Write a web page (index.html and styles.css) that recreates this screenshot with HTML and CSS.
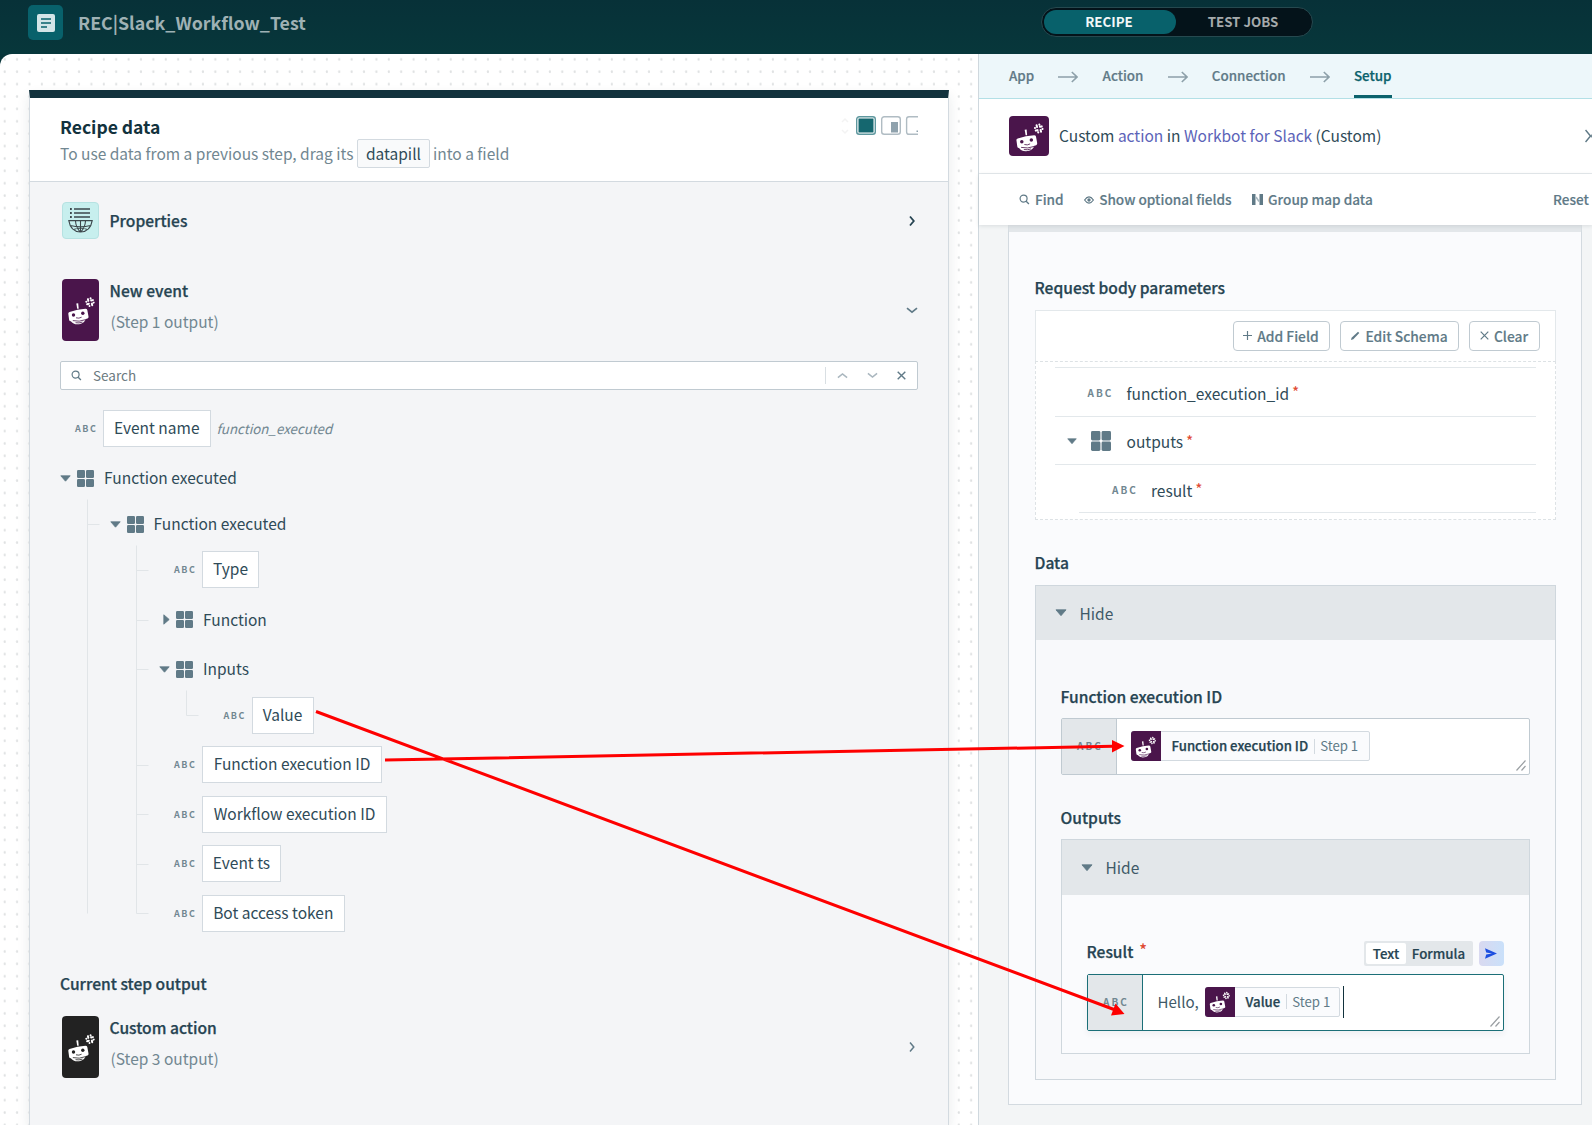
FILE: index.html
```html
<!DOCTYPE html>
<html lang="en">
<head>
<meta charset="utf-8">
<title>REC|Slack_Workflow_Test</title>
<link rel="stylesheet" href="styles.css">
</head>
<body>
<svg class="defs" width="0" height="0">
  <symbol id="bot" viewBox="0 0 38 38">
    <path d="M14.300 12.400l1.900-.2.500 5.600h-1.500z" fill="#fff"/>
    <path d="M6.300 22.800q-.2-1.400 1.200-1.800 8-2.800 16-3.200 1.500 0 1.800 1.300l1.200 6.300q.3 1.600-1 2.100l-1.700.6q-1.600 4.400-6.600 5.100-5.600.7-8.400-3-1.500 0-1.700-1.500z" fill="#fff"/>
    <circle class="cut" cx="11.500" cy="24" r="1.700"/><circle class="cut" cx="20.800" cy="22.300" r="1.700"/>
    <path class="cutline" d="M14 26.800q3 1 5.600-.6M10.800 29.600q6.400 1.600 13-1M13.500 31.700q3.500.7 7-.6"/>
    <g transform="rotate(-14 28 11.200)" stroke="#fff" stroke-width="2" stroke-linecap="round"><path d="M26.700 7.700v1.800M29.500 9.900h1.800M29.400 14.800v-1.800M26.500 12.500h-1.800M29.500 7.600v.1M31.500 12.500h-.1M26.600 14.800v-.1M24.500 9.900h.1"/></g>
  </symbol>
  <symbol id="grid" viewBox="0 0 17 17"><g fill="#607a87"><rect width="8" height="8" rx="1.2"/><rect x="9" width="8" height="8" rx="1.2"/><rect y="9" width="8" height="8" rx="1.2"/><rect x="9" y="9" width="8" height="8" rx="1.2"/></g></symbol>
  <symbol id="down" viewBox="0 0 11 7"><path d="M.8.8h9.4L5.5 6.2z" fill="#607a87" stroke="#607a87" stroke-width=".8" stroke-linejoin="round"/></symbol>
  <symbol id="right" viewBox="0 0 7 11"><path d="M.8.8v9.4L6.2 5.5z" fill="#607a87" stroke="#607a87" stroke-width=".8" stroke-linejoin="round"/></symbol>
  <symbol id="arrow" viewBox="0 0 20 12"><path d="M0 6h19M13.8 1l5.2 5-5.2 5" fill="none" stroke="#8da0a9" stroke-width="1.6"/></symbol>
  <symbol id="lens" viewBox="0 0 12 12"><circle cx="5" cy="5" r="3.8" fill="none" stroke="#607a87" stroke-width="1.3"/><path d="M7.8 7.8l3 3" stroke="#607a87" stroke-width="1.5"/></symbol>
  <symbol id="grip" viewBox="0 0 10 11"><path d="M.5 10.5l9-10M5.5 10.5l4-4.5" stroke="#9a9fa3" stroke-width="1.2"/></symbol>
  <symbol id="chev" viewBox="0 0 12 7"><path d="M1 1.2l5 4 5-4" fill="none" stroke="currentColor" stroke-width="1.7"/></symbol>
</svg>

<header class="topbar">
  <div class="logo"><svg width="18" height="18" viewBox="0 0 18 18"><rect width="18" height="18" rx="2" fill="#d3e5e8"/><path d="M4 5h10M4 9h10M4 13h6" stroke="#08616b" stroke-width="1.7"/></svg></div>
  <h1>REC|Slack_Workflow_Test</h1>
  <div class="tabs"><span class="on">RECIPE</span><span>TEST JOBS</span></div>
</header>

<main class="canvas">
  <section class="data">
    <div class="data-head">
      <div>
        <h2>Recipe data</h2>
        <p class="hint"><span>To use data from a previous step, drag its</span><b>datapill</b><span>into a field</span></p>
      </div>
      <svg class="views" width="78" height="22" viewBox="0 0 78 22">
        <path d="M1 7l3-3 3 3M1 15l3 3 3-3" fill="none" stroke="#f3f3f3" stroke-width="1.5"/>
        <rect x="15.7" y="1.7" width="18.6" height="17.6" rx="2.5" fill="#fff" stroke="#5e979e" stroke-width="1.4"/><rect x="17.5" y="3.5" width="15" height="14" fill="#15676f"/>
        <rect x="40.7" y="1.7" width="18.6" height="17.6" rx="2.5" fill="#fff" stroke="#b0bcc3" stroke-width="1.4"/><rect x="50" y="7" width="7" height="10.5" fill="#8fa2ad"/>
        <path d="M77 1.7H68q-2.4 0-2.4 2.4v12.8q0 2.4 2.4 2.4h9" fill="none" stroke="#b0bcc3" stroke-width="1.4"/><path d="M75.500 15.500H77V17h-1.500z" fill="#8fa2ad"/>
      </svg>
    </div>
    <div class="data-body">
      <div class="step props">
        <div class="globe"><svg width="25" height="27" viewBox="0 0 25 27"><g fill="none" stroke="#3d474c" stroke-width="1.3"><path d="M6 2h16M6 6h16M6 10h16"/><path stroke-width="2" d="M2 2h1.8M2 6h1.8M2 10h1.8"/><path stroke-width="1.1" d="M.8 13.6h23.4q-1.8 11-11.7 11.4Q2.600 24.600.8 13.600zM2.500 18.500q10 2.500 20 0M5.800 22.500q6.700-3 13.400 0M7.500 14q.4 7 5 11M17.500 14q-.4 7-5 11M12.500 14v11"/></g></svg></div>
        <div class="names"><strong>Properties</strong></div>
        <svg class="go dark" width="7" height="12" viewBox="0 0 7 12"><path d="M1 1.500l3.800 4.500L1 10.500" fill="none" stroke="currentColor" stroke-width="1.800"/></svg>
      </div>
      <div class="step tall">
        <div class="tile"><svg width="38" height="38"><use href="#bot"/></svg></div>
        <div class="names"><strong>New event</strong><span>(Step 1 output)</span></div>
        <svg class="go" width="12" height="7"><use href="#chev"/></svg>
      </div>
      <div class="search">
        <svg width="11" height="11"><use href="#lens"/></svg><span>Search</span>
        <i></i>
        <svg class="pale up" width="11" height="7"><use href="#chev"/></svg>
        <svg class="pale" width="11" height="7"><use href="#chev"/></svg>
        <svg width="9" height="9" viewBox="0 0 9 9"><path d="M.7.7l7.600 7.600M8.300.7L.7 8.300" stroke="#607a87" stroke-width="1.400"/></svg>
      </div>
      <div class="tree">
        <svg class="lines" width="140" height="520" viewBox="0 0 140 520"><path d="M27.500 88.500v414M27.500 113.500h12M76.500 134.500v368M76.500 159.500h12M76.500 209.500h12M76.500 258.500h12M76.500 354.500h12M76.500 403.500h12M76.500 453.500h12M76.500 502.500h12M126.500 279.500v25h12" fill="none" stroke="#e1e5e8"/></svg>
        <div class="row l0"><abbr>ABC</abbr><span class="pill" style="width:107.500px">Event name</span><em>function_executed</em></div>
        <div class="row node n0"><svg width="11" height="7"><use href="#down"/></svg><svg width="17" height="17"><use href="#grid"/></svg>Function executed</div>
        <div class="row node n1"><svg width="11" height="7"><use href="#down"/></svg><svg width="17" height="17"><use href="#grid"/></svg>Function executed</div>
        <div class="row l2 close"><abbr>ABC</abbr><span class="pill" style="width:57px">Type</span></div>
        <div class="row node n2"><svg class="r" width="11" height="11"><use href="#right"/></svg><svg width="17" height="17"><use href="#grid"/></svg>Function</div>
        <div class="row node n2"><svg width="11" height="7"><use href="#down"/></svg><svg width="17" height="17"><use href="#grid"/></svg>Inputs</div>
        <div class="row l3 close"><abbr>ABC</abbr><span class="pill" style="width:62px">Value</span></div>
        <div class="row l2"><abbr>ABC</abbr><span class="pill" style="width:180px">Function execution ID</span></div>
        <div class="row l2"><abbr>ABC</abbr><span class="pill" style="width:185px">Workflow execution ID</span></div>
        <div class="row l2"><abbr>ABC</abbr><span class="pill" style="width:79px">Event ts</span></div>
        <div class="row l2"><abbr>ABC</abbr><span class="pill" style="width:142.500px">Bot access token</span></div>
      </div>
      <h3>Current step output</h3>
      <div class="step tall last">
        <div class="tile black"><svg width="38" height="38"><use href="#bot"/></svg></div>
        <div class="names"><strong>Custom action</strong><span>(Step 3 output)</span></div>
        <svg class="go" width="7" height="12" viewBox="0 0 7 12"><path d="M1 1.500l3.800 4.500L1 10.500" fill="none" stroke="currentColor" stroke-width="1.500"/></svg>
      </div>
    </div>
  </section>

  <aside class="config">
    <nav>
      <span>App</span><svg width="20" height="12"><use href="#arrow"/></svg>
      <span>Action</span><svg width="20" height="12"><use href="#arrow"/></svg>
      <span>Connection</span><svg width="20" height="12"><use href="#arrow"/></svg>
      <span class="on">Setup</span>
    </nav>
    <div class="action">
      <div class="tile sq"><svg width="39" height="39"><use href="#bot"/></svg></div>
      <p>Custom <a>action</a> in <a>Workbot for Slack</a> (Custom)</p>
      <svg width="7" height="14" viewBox="0 0 7 14"><path d="M.5 1l5 6-5 6M7 5.500v3" fill="none" stroke="#607a87" stroke-width="1.500"/></svg>
    </div>
    <div class="tools">
      <span><svg width="11" height="11"><use href="#lens"/></svg>Find</span>
      <span><svg width="10" height="8" viewBox="0 0 10 8"><path d="M.6 4Q5-2.400 9.400 4 5 10.400.6 4z" fill="none" stroke="#607a87" stroke-width="1.200"/><circle cx="5" cy="4" r="1.700" fill="#607a87"/></svg>Show optional fields</span>
      <span><svg width="11" height="11" viewBox="0 0 11 11"><path d="M0 0h3.500v11H0zM7.500 0H11v11H7.500z" fill="#607a87"/><path d="M4 3l3 4.500" stroke="#a5b5bd" stroke-width="1.500"/></svg>Group map data</span>
      <span class="reset">Reset</span>
    </div>
    <div class="scroll">
      <div class="form">
        <h4 class="first">Request body parameters</h4>
        <div class="schema">
          <div class="buttons">
            <button style="width:97px"><svg width="9" height="9" viewBox="0 0 10 10"><path d="M5 0v10M0 5h10" stroke="#607a87" stroke-width="1.300"/></svg>Add Field</button>
            <button style="width:119px"><svg width="10" height="10" viewBox="0 0 10 10"><path d="M1 9l.6-2.300L8 .8l1.300 1.300-6 6.200z" fill="#607a87"/></svg>Edit Schema</button>
            <button style="width:71px"><svg width="9" height="9" viewBox="0 0 9 9"><path d="M.7.7l7.600 7.600M8.300.7L.7 8.300" stroke="#607a87" stroke-width="1.200"/></svg>Clear</button>
          </div>
          <div class="fields">
            <div class="f"><abbr>ABC</abbr><span>function_execution_id</span><sup>*</sup></div>
            <div class="f g"><svg width="10" height="6.500"><use href="#down"/></svg><svg width="20" height="20"><use href="#grid"/></svg><span>outputs</span><sup>*</sup></div>
            <div class="f sub"><abbr>ABC</abbr><span>result</span><sup>*</sup></div>
          </div>
        </div>
        <h4 class="second">Data</h4>
        <div class="group outer">
          <div class="hide"><svg width="12" height="7.500"><use href="#down"/></svg>Hide</div>
          <h4 class="fe">Function execution ID</h4>
          <div class="input">
            <div class="type">ABC</div>
            <div class="value">
              <div class="token" style="width:239px"><i class="tile"><svg width="29" height="29"><use href="#bot"/></svg></i><b>Function execution ID</b><u></u><span>Step 1</span></div>
            </div>
            <svg class="grip" width="10" height="11"><use href="#grip"/></svg>
          </div>
          <h4 class="out">Outputs</h4>
          <div class="group inner">
            <div class="hide"><svg width="12" height="7.500"><use href="#down"/></svg>Hide</div>
            <div class="result">
              <h4>Result <sup>*</sup></h4>
              <div class="mode"><span class="on">Text</span><span>Formula</span></div>
              <div class="send"><svg width="12" height="11" viewBox="0 0 12 11"><path d="M0 .3l12 5.200-12 5.200 1.200-4.200L7 5.500 1.200 4.500z" fill="#1c4fe0"/></svg></div>
            </div>
            <div class="input focus">
              <div class="type">ABC</div>
              <div class="value">
                <span class="txt">Hello,</span>
                <div class="token" style="width:135px"><i class="tile"><svg width="29" height="29"><use href="#bot"/></svg></i><b>Value</b><u></u><span>Step 1</span></div>
                <s></s>
              </div>
              <svg class="grip" width="10" height="11"><use href="#grip"/></svg>
            </div>
          </div>
        </div>
      </div>
    </div>
  </aside>
</main>

<svg class="links" width="1592" height="1125" viewBox="0 0 1592 1125">
  <path d="M385 760L1113 746.300M316 711.500L1114 1009.500" stroke="#fe0000" stroke-width="3"/>
  <path d="M1124.500 746l-12.500-6v12.500zM1124.500 1014l-9-10.500-4.500 12z" fill="#fe0000"/>
</svg>
</body>
</html>
```
FILE: styles.css
```css
* { box-sizing: border-box; }
body {
  margin: 0; width: 1592px; height: 1125px; overflow: hidden; position: relative;
  background: #073439; color: #2f4b58;
  font: 400 15.500px/20px "Noto Sans CJK SC", sans-serif;
}
h1, h2, h3, h4, p { margin: 0; }
svg { display: block; flex: none; }
.defs { position: absolute; }
.cut { fill: var(--tile, #4a154b); }
.cutline { fill: none; stroke: var(--tile, #4a154b); stroke-width: .8; }

.topbar { height: 54px; display: flex; padding: 5px 0 0 28px; background: linear-gradient(#073138, #07373b); }
.logo { width: 35px; height: 35px; border-radius: 5px; background: #08616b; display: grid; place-items: center; }
h1 { width: 963px; margin-left: 15px; font-size: 17.800px; line-height: 35px; color: #9fb1b4; }
.tabs { width: 272px; height: 30px; margin-top: 2px; padding: 2px; border: 1px solid #26494f; border-radius: 15px; background: #04131a; display: flex; font-size: 13.300px; font-weight: 700; line-height: 24px; color: #a5aaac; text-align: center; }
.tabs span { width: 136px; height: 24px; border-radius: 12px; }
.tabs .on { width: 132px; padding-right: 2px; background: #08616b; color: #f2f8f8; flex: none; }

.canvas { height: 1071px; display: flex; border-top-left-radius: 12px; overflow: hidden; background: radial-gradient(circle at 4.700px 5.300px, #dfe1e2 0 .9px, transparent 1.500px) 0 0 / 12.400px 12.400px #fff; }

.data { width: 920px; margin: 36px 29px 0 29px; border: 1px solid #d3dae0; border-top: 8px solid #12323d; border-bottom: 0; background: #f4f5f7; box-shadow: 0 6px 12px rgba(30, 50, 60, .1); }
.data-head { height: 84px; padding: 17px 29px 0 30px; display: flex; justify-content: space-between; background: #fff; border-bottom: 1px solid #d3dae0; }
h2 { font-size: 17.500px; line-height: 24px; color: #12323d; }
.hint { display: flex; align-items: center; line-height: 29px; color: #718791; }
.hint b { width: 73px; height: 29px; margin: 0 3px 0 3.500px; line-height: 27px; border: 1px solid #d3dae0; border-radius: 2px; background: #f9fafb; font-weight: 400; color: #2f4b58; text-align: center; }
.data-body { padding: 20px 30px 0; }
.step { display: flex; align-items: center; padding-left: 2px; height: 37px; }
.tall { height: 62px; margin-top: 40px; }
.last { margin-top: 21px; }
.globe { width: 37px; height: 37px; border: 1px solid #b6e2e2; border-radius: 4px; background: #c7efee; display: grid; place-items: center; }
.tile { width: 37px; height: 62px; border-radius: 4px; background: #4a154b; display: grid; place-items: center; flex: none; }
.black { --tile: #222; background: #222; }
.names { flex: 1; padding-left: 10.500px; display: flex; flex-direction: column; }
.tall .names { margin-top: -8px; }
.names span { line-height: 31px; padding-left: 1px; color: #718791; }
.names strong { line-height: 31px; }
strong, h3, h4 { font-size: 15.600px; font-weight: 500; color: #264452; -webkit-text-stroke: .25px #264452; }
.go { color: #607a87; }
.go[width="7"] { margin-right: 2px; }
.dark { color: #264452; }
.search { height: 29px; margin-top: 20px; padding: 0 11px 0 10px; display: flex; align-items: center; background: #fff; border: 1px solid #c0cad1; border-radius: 2px; font-size: 13.500px; color: #6b7a80; }
.search span { margin: -1px 0 0 11px; flex: 1; }
.search i { width: 1px; height: 17px; background: #d9dfe3; margin-right: 11px; }
.pale { color: #aab7bf; margin-right: 19px; }
.up { transform: scaleY(-1); }
.tree { position: relative; padding-top: 20px; }
.lines { position: absolute; left: 0; top: 20.500px; }
.row { position: relative; height: 37px; margin-top: 12.650px; display: flex; align-items: center; }
.row.l0 { margin-top: 0; padding-left: 15px; }
.row.n1 { margin-top: 9px; padding-left: 49.500px; }
.row.close { margin-top: 8.800px; }
.l2 { padding-left: 114px; }
.n2 { padding-left: 99px; }
.l3 { padding-left: 163.500px; }
abbr, .type { font-size: 9px; font-weight: 700; letter-spacing: 1.500px; color: #718791; }
.row abbr { width: 28px; padding-top: 1px; }
.pill { height: 37px; line-height: 33px; border: 1px solid #d3dae0; background: #fff; text-align: center; }
.row em { margin-left: 6px; font-size: 13.300px; color: #718791; }
.node { padding-bottom: 2px; }
.node svg { margin-top: 2px; }
.node svg.r { margin: 2px -2px 0 2px; }
.node svg + svg { margin: 2px 10px 0 6px; }
h3 { margin-top: 39px; line-height: 24px; }

.config { width: 614px; border-left: 1px solid #cfd8de; background: #f3f5f6; display: flex; flex-direction: column; }
nav { height: 45px; padding-left: 30px; display: flex; background: #edf7fa; border-bottom: 1px solid #b3e0e6; font-size: 13.400px; font-weight: 500; line-height: 42px; color: #607a87; -webkit-text-stroke: .2px #607a87; }
nav svg { margin: 16.500px 24.200px 0; }
nav .on { color: #0b626c; border-bottom: 3px solid #0b626c; height: 44px; -webkit-text-stroke: .25px #0b626c; }
.action { height: 75px; padding-left: 30px; display: flex; align-items: center; background: #fff; border-bottom: 1px solid #e6eaed; }
.tile.sq { width: 40px; height: 40px; }
.action p { flex: 1; padding-left: 10px; margin-top: -3px; }
.action a { color: #5c63b8; }
.tools { height: 51px; padding: 0 3px 0 40px; display: flex; align-items: center; gap: 20.500px; background: #fff; font-size: 13.600px; font-weight: 500; color: #607a87; -webkit-text-stroke: .15px #607a87; box-shadow: 0 1px 4px rgba(30, 50, 60, .12); position: relative; }
.tools span { display: flex; align-items: center; gap: 5px; margin-top: -2px; }
.tools svg { margin-top: 2px; }
.tools .reset { margin-left: auto; }
.scroll { padding-left: 29px; }
.form { width: 574px; height: 880px; padding: 0 25.500px 0 25.500px; border: 1px solid #d3dae0; border-top: 7px solid #e3e7ea; background: #fafbfd; }
.first { padding-top: 43px; line-height: 24px; }
.schema { margin-top: 11px; }
.buttons { height: 51px; padding-right: 15px; display: flex; justify-content: flex-end; align-items: center; gap: 10px; border: 1px solid #e3e8eb; border-bottom: 0; background: #fff; }
button { height: 30px; padding: 0 0 1px; border: 1px solid #c0cad1; border-radius: 4px; background: #fff; display: flex; align-items: center; justify-content: center; gap: 5px; font: 500 13.800px/26px "Noto Sans CJK SC", sans-serif; color: #607a87; -webkit-text-stroke: .15px #607a87; }
.fields { height: 159px; padding: 5px 19px 0; border: 1px dashed #dde2e5; background: #fff; }
.f { height: 48.500px; display: flex; align-items: center; padding: 2px 0 0 33px; border-top: 1px solid #e3e8eb; }
.f abbr { width: 39px; font-size: 10px; letter-spacing: 2px; }
.f.g { padding-left: 12px; }
.g svg + svg { margin: 0 16px 0 14px; }
.f.sub { margin-left: 24.500px; border-bottom: 1px solid #e3e8eb; height: 49px; position: relative; }
.sub::before { content: ""; width: 25px; height: 1px; background: #e3e8eb; position: absolute; left: -24.500px; top: -1px; }
sup { align-self: flex-start; margin: 11px 0 0 3px; line-height: 20px; vertical-align: baseline; font-size: 15.500px; color: #df4a32; -webkit-text-stroke: 0; }
.second { margin-top: 29.500px; line-height: 24px; }
.group { border: 1px solid #cfd7dd; }
.outer { height: 495px; margin-top: 11px; background: #f8f9fb; padding: 0 25px; }
.hide { height: 54.500px; margin: 0 -25px; padding-left: 19px; display: flex; align-items: center; gap: 13px; background: #e3e7ea; color: #3f5a68; }
.fe { margin-top: 43.500px; line-height: 24px; }
.input { width: 469px; height: 57px; margin-top: 10.500px; display: flex; background: #fff; border: 1px solid #c0cad1; border-radius: 2px; position: relative; }
.type { width: 55px; padding-left: 3px; border-right: 1px solid #c0cad1; background: #e3e7ea; line-height: 54px; text-align: center; font-size: 10px; letter-spacing: 2px; }
.value { display: flex; align-items: center; padding-left: 14px; padding-bottom: 1px; }
.token { height: 30px; display: flex; align-items: center; border: 1px solid #d3dae0; border-radius: 2px; background: #fafbfd; font-size: 13.200px; }
.token .tile { width: 30px; height: 30px; margin-left: -1px; border-radius: 3px 0 0 3px; }
.token b { margin-left: 11px; font-weight: 500; color: #264452; -webkit-text-stroke: .25px #264452; }
.token u { width: 1px; height: 15px; margin: 0 5px 0 6px; background: #d3dae0; }
.token span { color: #607a87; }
.grip { position: absolute; right: 3px; bottom: 3px; }
.out { margin-top: 29.500px; line-height: 24px; }
.inner { width: 469px; height: 215px; margin-top: 10.500px; padding: 0 25px; background: #fafbfd; }
.result { height: 25px; margin-top: 46.500px; display: flex; align-items: center; }
.result h4 { flex: 1; display: flex; margin-top: -5px; }
.result sup { margin: -2px 0 0 6px; font-size: 16px; }
.mode { width: 109px; height: 25px; padding: 2px; display: flex; background: #e3e7ea; border-radius: 2px; font-size: 13.300px; font-weight: 500; line-height: 21px; text-align: center; color: #264452; -webkit-text-stroke: .2px #264452; }
.mode span { flex: 1; }
.mode .on { flex: none; width: 40px; background: #fff; border-radius: 2px; }
.send { width: 25px; height: 25px; margin-left: 5.500px; border-radius: 4px; background: linear-gradient(90deg, #d9d9f0, #c9e0fa); display: grid; place-items: center; }
.focus { width: 417px; margin-top: 7.500px; border-color: #1b6f78; box-shadow: 0 3px 6px rgba(30, 50, 60, .06); }
.focus .type { border-color: #1b6f78; }
.txt { margin: -1px 6px 0 1px; font-size: 15.100px; color: #3f5a68; }
.value s { width: 1.500px; height: 32px; margin-left: 3px; background: #12323d; }
.links { position: absolute; left: 0; top: 0; }
```
